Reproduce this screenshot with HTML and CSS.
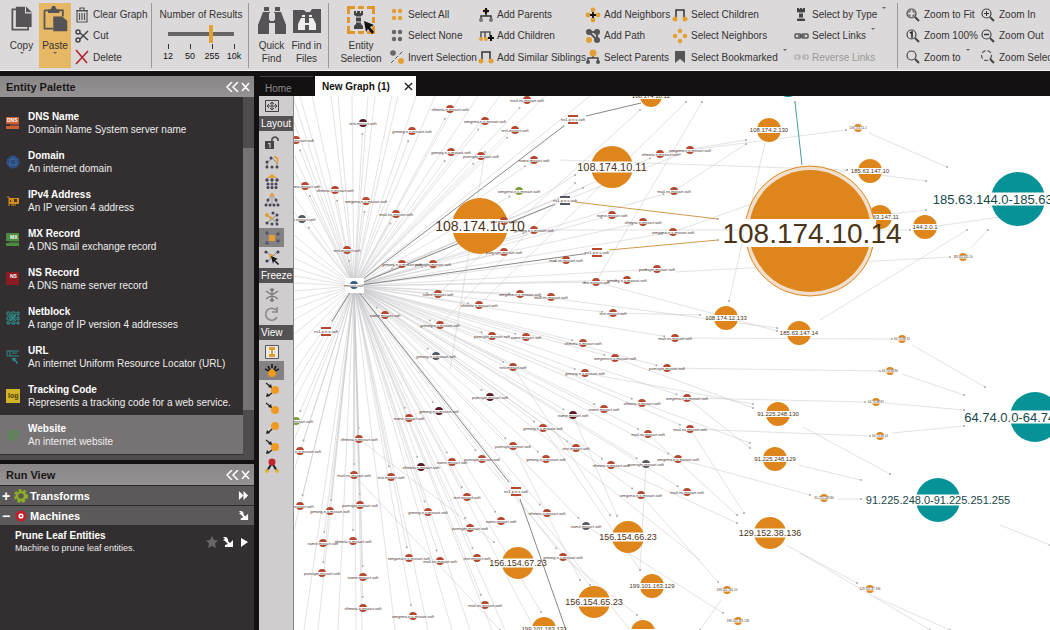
FILE: index.html
```
<!DOCTYPE html>
<html lang="en">

<head>
    <meta charset="UTF-8">
    <title>New Graph (1)</title>
    <link rel="stylesheet" href="styles.css">
</head>

<body>

    <svg class="sprite" aria-hidden="true">
        <symbol id="trash" viewBox="0 0 16 16"><path d="M3 4h10v11H3zM2 3.5h12M6 3V1h4v2M5.5 6v7M8 6v7M10.5 6v7" fill="none" stroke="#555" stroke-width="1.2"/></symbol>
        <symbol id="cut" viewBox="0 0 16 16"><g fill="none" stroke="#444" stroke-width="1.5"><circle cx="4" cy="4" r="2"/><circle cx="4" cy="12" r="2"/><path d="M6 5l8 7M6 11l8-8"/></g></symbol>
        <symbol id="delete" viewBox="0 0 16 16"><path d="M2 1l11 13M14 2L2 15" fill="none" stroke="#b3232d" stroke-width="1.6"/></symbol>
        <symbol id="copy" viewBox="0 0 28 32"><path d="M7 5H3v23h18v-3" fill="none" stroke="#555" stroke-width="2"/><path d="M7 2h12l6 6v17H7z" fill="#555355"/><path d="M18 2v7h7" fill="none" stroke="#ddd" stroke-width="1.2"/></symbol>
        <symbol id="paste" viewBox="0 0 28 32"><path d="M2 6h21v7M2 6v21h10" fill="none" stroke="#555" stroke-width="2"/><path d="M6 9V5h3l2-4h3l2 4h3v4zM12 13h10l6 5v12H12z" fill="#555355"/></symbol>
        <symbol id="binoculars" viewBox="0 0 28 30"><path d="M6 2h5v4H6zM17 2h5v4h-5zM5 7h7v9h4V7h7l5 13v9H17V18h-6v11H0v-9z" fill="#555355"/><path d="M11 8h1v7h-1zM16 8h1v7h-1z" fill="#ddd"/></symbol>
        <symbol id="find-files" viewBox="0 0 28 30"><path d="M0 5h11l2 2h4l2-3h9v24H0z" fill="#555355"/><path d="M9 10h3v2H9zM16 10h3v2h-3zM8 13h4v5h4v-5h4l3 6v6h-7v-5h-4v5H5v-6z" fill="#eee"/></symbol>
        <symbol id="entity-select" viewBox="0 0 28 28"><path d="M1.5 8V1.5H8M11 1.5h6M20 1.5h6.5V8M26.5 11v6M26.5 20v6.5H20M17 26.5h-6M8 26.5H1.5V20M1.5 17v-6" fill="none" stroke="#e5952e" stroke-width="3"/><path d="M7 5h2v2h1V5h3v2h1V5h2v4l-2 1v8l2 2v3H7v-3l2-2v-8L7 9z" fill="#444"/><path d="M9 11h5M9 16h5" stroke="#ddd"/><path d="M17 15l10 4-4 2 4 5-2 2-4-5-2 3z" fill="#111"/></symbol>
        <symbol id="dots-all" viewBox="0 0 16 16"><g fill="#e5a033"><circle cx="5" cy="4" r="2.2"/><circle cx="11" cy="4" r="2.2"/><circle cx="5" cy="11" r="2.2"/><circle cx="11" cy="11" r="2.2"/></g></symbol>
        <symbol id="dots-none" viewBox="0 0 16 16"><g fill="#666"><circle cx="5" cy="4" r="2.2"/><circle cx="11" cy="4" r="2.2"/><circle cx="5" cy="11" r="2.2"/><circle cx="11" cy="11" r="2.2"/></g></symbol>
        <symbol id="invert" viewBox="0 0 16 16"><circle cx="4" cy="4" r="2.8" fill="#666"/><path d="M2 14L14 2" stroke="#555" stroke-dasharray="4 2"/><circle cx="12" cy="12" r="3" fill="#e5a033"/></symbol>
        <symbol id="add-parents" viewBox="0 0 16 16"><path d="M3 12V9h10v3M8 9V6" fill="none" stroke="#333" stroke-width="1.5"/><circle cx="8" cy="4" r="2.5" fill="#e5a033"/><path d="M8 1v6M5 4h6" stroke="#111" stroke-width="2"/><circle cx="3" cy="13" r="2" fill="#777"/><circle cx="13" cy="13" r="2" fill="#777"/></symbol>
        <symbol id="add-children" viewBox="0 0 16 16"><path d="M3 10V4h9v5M7 4v6" fill="none" stroke="#555" stroke-width="1.5"/><circle cx="3" cy="11" r="2" fill="#e5a033"/><circle cx="8" cy="11" r="2" fill="#e5a033"/><path d="M13 7v6M10 10h6" stroke="#111" stroke-width="2"/></symbol>
        <symbol id="siblings" viewBox="0 0 16 16"><path d="M4 11V3h8v8" fill="none" stroke="#333" stroke-width="1.5"/><circle cx="3" cy="12" r="2.5" fill="#e5a033"/><circle cx="13" cy="12" r="2.5" fill="#e5a033"/></symbol>
        <symbol id="add-neighbors" viewBox="0 0 16 16"><g fill="#e5a033"><circle cx="8" cy="3" r="2.4"/><circle cx="3" cy="8" r="2.4"/><circle cx="13" cy="8" r="2.4"/><circle cx="8" cy="13" r="2.4"/></g><path d="M8 5v6M5 8h6" stroke="#111" stroke-width="1.8"/></symbol>
        <symbol id="add-path" viewBox="0 0 16 16"><path d="M4 4h8v8M4 4l8 8" fill="none" stroke="#555" stroke-width="2"/><g fill="#555"><circle cx="4" cy="4" r="3"/><circle cx="12" cy="4" r="3"/><circle cx="12" cy="12" r="3"/></g><circle cx="4" cy="12" r="3" fill="#e5a033"/></symbol>
        <symbol id="select-parents" viewBox="0 0 16 16"><path d="M3 12V9h10v3M8 9V5" fill="none" stroke="#444" stroke-width="1.5"/><circle cx="8" cy="4" r="3.5" fill="#e5a033"/><circle cx="3" cy="13" r="2" fill="#555"/><circle cx="13" cy="13" r="2" fill="#555"/></symbol>
        <symbol id="neighbors" viewBox="0 0 16 16"><g fill="#e5a033"><circle cx="8" cy="3" r="2.2"/><circle cx="3" cy="8" r="2.2"/><circle cx="13" cy="8" r="2.2"/><circle cx="8" cy="13" r="2.2"/></g></symbol>
        <symbol id="bookmark" viewBox="0 0 16 16"><path d="M3 2h10v12l-5-4-5 4z" fill="#555"/></symbol>
        <symbol id="rook" viewBox="0 0 16 16"><path d="M4 1h2v1h1V1h2v1h1V1h2v4l-2 1v5l2 1v2H4v-2l2-1V6L4 5z" fill="#444"/><path d="M5 6h6M5 11h6" stroke="#ddd"/></symbol>
        <symbol id="links" viewBox="0 0 16 16"><g fill="none" stroke="#555" stroke-width="1.5"><rect x="2" y="6" width="6" height="4" rx="1"/><rect x="9" y="6" width="6" height="4" rx="1"/><path d="M5 8h7"/></g></symbol>
        <symbol id="links-off" viewBox="0 0 16 16"><g fill="none" stroke="#aaa" stroke-width="1.2"><rect x="2" y="6" width="5" height="4" rx="1"/><rect x="10" y="6" width="5" height="4" rx="1"/><path d="M5 8h2M10 8h3"/></g></symbol>
        <symbol id="zoom" viewBox="0 0 16 16"><circle cx="6.5" cy="6.5" r="4.5" fill="none" stroke="#444" stroke-width="1.2"/><path d="M10 10l4 4" stroke="#444" stroke-width="2"/></symbol>
        <symbol id="zoom-fit" viewBox="0 0 16 16"><use href="#zoom"/><path d="M4 6V4h2M7 4h2v2M9 7v2H7M6 9H4V7" fill="none" stroke="#555"/></symbol>
        <symbol id="zoom-100" viewBox="0 0 16 16"><use href="#zoom"/><path d="M5 5l2-1v6" fill="none" stroke="#222" stroke-width="1.5"/></symbol>
        <symbol id="zoom-in" viewBox="0 0 16 16"><use href="#zoom"/><path d="M4 6.5h5M6.5 4v5" stroke="#333"/></symbol>
        <symbol id="zoom-out" viewBox="0 0 16 16"><use href="#zoom"/><path d="M4 6.5h5" stroke="#333" stroke-width="1.5"/></symbol>
        <symbol id="zoom-sel" viewBox="0 0 16 16"><circle cx="6.5" cy="6.5" r="5" fill="none" stroke="#555" stroke-width="1.2" stroke-dasharray="4 2"/><path d="M10 10l4 4" stroke="#444" stroke-width="2"/></symbol>
        <symbol id="collapse" viewBox="0 0 24 10"><path d="M6 0L1 5l5 5M12 0L7 5l5 5M16 1l7 8M23 1l-7 8" fill="none" stroke="#fff" stroke-width="1.5"/></symbol>
        <symbol id="wrench" viewBox="0 0 12 12"><path d="M1 1l3 0 2 2v2l2 2 3-3v7H3V9l3-1-3-3-2-1 2-1z" fill="#fff"/></symbol>
        <symbol id="move" viewBox="0 0 16 16"><path d="M1.5 2.5h13v11h-13zM8 4v8M3 8h10M6 6l2-2 2 2M6 10l2 2 2-2M5 6L3 8l2 2M11 6l2 2-2 2" fill="none" stroke="#444"/></symbol>
        <symbol id="unlock" viewBox="0 0 16 16"><path d="M1 6h9v8H1z" fill="#444"/><path d="M8 7V4q3-4 6 0v2" fill="none" stroke="#444" stroke-width="1.5"/><path d="M4 9l2-1v5" stroke="#ddd" fill="none"/></symbol>
        <symbol id="tree-a" viewBox="0 0 16 16"><path d="M8 4L3 9M8 4l5 5M3 9v4M13 9v4" stroke="#888" fill="none"/><g fill="#445"><circle cx="3" cy="8" r="1.5"/><circle cx="3" cy="13" r="1.5"/><circle cx="8" cy="13" r="1.5"/><circle cx="13" cy="13" r="1.5"/><circle cx="7" cy="4" r="1.5"/></g><path d="M10 3q5 0 3 6" stroke="#e5a033" stroke-width="2" fill="none"/></symbol>
        <symbol id="tree-b" viewBox="0 0 16 16"><path d="M8 1L3 5h10z" fill="#e5a033"/><g fill="#445"><circle cx="3" cy="7" r="1.7"/><circle cx="8" cy="7" r="1.7"/><circle cx="13" cy="7" r="1.7"/><circle cx="4" cy="11" r="1.5"/><circle cx="8" cy="11" r="1.5"/><circle cx="12" cy="11" r="1.5"/><circle cx="4" cy="14.5" r="1.5"/><circle cx="8" cy="14.5" r="1.5"/><circle cx="12" cy="14.5" r="1.5"/></g></symbol>
        <symbol id="tree-c" viewBox="0 0 16 16"><path d="M8 3L4 8 2 13M8 3l4 5 2 5M8 3v10" stroke="#999" fill="none"/><circle cx="8" cy="3" r="2" fill="#e5a033"/><g fill="#445"><circle cx="4" cy="8" r="1.5"/><circle cx="12" cy="8" r="1.5"/><circle cx="2" cy="13" r="1.5"/><circle cx="6" cy="13" r="1.5"/><circle cx="10" cy="13" r="1.5"/><circle cx="14" cy="13" r="1.5"/></g></symbol>
        <symbol id="tree-d" viewBox="0 0 16 16"><path d="M3 4l10 8M3 12l10-8" stroke="#888"/><circle cx="3" cy="4" r="2" fill="#e5a033"/><circle cx="7" cy="7" r="1.7" fill="#e5a033"/><g fill="#445"><circle cx="9" cy="2" r="1.5"/><circle cx="13" cy="4" r="1.5"/><circle cx="13" cy="9" r="1.5"/><circle cx="3" cy="12" r="1.5"/><circle cx="8" cy="13" r="1.5"/><circle cx="13" cy="13" r="1.5"/></g></symbol>
        <symbol id="tree-e" viewBox="0 0 16 16"><path d="M3 3l5 5 5-5M3 13l5-5 5 5" stroke="#888" fill="none"/><path d="M5 5h6v6H5z" fill="#e5a033"/><g fill="#556"><circle cx="3" cy="3" r="1.8"/><circle cx="14" cy="4" r="1.8"/><circle cx="3" cy="13" r="1.8"/><circle cx="14" cy="11" r="1.8"/></g></symbol>
        <symbol id="tree-f" viewBox="0 0 16 16"><path d="M2 2l6 6M8 8l5-5M8 8l-5 5" stroke="#888"/><circle cx="7" cy="7" r="2" fill="#e5a033"/><g fill="#445"><circle cx="2" cy="3" r="1.6"/><circle cx="14" cy="3" r="1.6"/><circle cx="3" cy="12" r="1.6"/></g><path d="M7 7l7 3-3 1 4 4-1 1-4-4-1 3z" fill="#111"/></symbol>
        <symbol id="snow" viewBox="0 0 16 16"><path d="M8 1v14M2 4l12 8M14 4L2 12M6 2l2 2 2-2M6 14l2-2 2 2" fill="none" stroke="#777" stroke-width="1.3"/></symbol>
        <symbol id="refresh" viewBox="0 0 16 16"><path d="M13 11A6 6 0 1 1 12 4M13 1v5H8" fill="none" stroke="#888" stroke-width="1.6"/></symbol>
        <symbol id="view-a" viewBox="0 0 16 16"><path d="M1.5 1.5h13v13h-13z" fill="#ece9ea" stroke="#555"/><path d="M5 3h6v3H9v4h2v3H5v-3h2V6H5z" fill="#e5a033"/></symbol>
        <symbol id="view-b" viewBox="0 0 16 16"><circle cx="8" cy="10" r="4" fill="#ef9a20"/><path d="M1 6l4 2M4 3l2 4M8 1v4M12 3l-2 4M15 6l-4 2" stroke="#222" stroke-width="1.7"/></symbol>
        <symbol id="view-c" viewBox="0 0 16 16"><circle cx="11" cy="8" r="4" fill="#ef9a20"/><path d="M2 1l5 4" stroke="#222" stroke-width="1.3"/><path d="M8 6L4 5l3-3z" fill="#222"/><path d="M8 11l-4 3" stroke="#222" stroke-width="1.3"/><path d="M2 15l1-4 3 3z" fill="#222"/></symbol>
        <symbol id="view-d" viewBox="0 0 16 16"><circle cx="11" cy="9" r="4" fill="#ef9a20"/><path d="M2 2l5 4" stroke="#222" stroke-width="1.3"/><path d="M8 7L4 6l3-3z" fill="#222"/></symbol>
        <symbol id="view-e" viewBox="0 0 16 16"><circle cx="11" cy="6" r="4" fill="#ef9a20"/><path d="M8 9l-4 4" stroke="#222" stroke-width="1.3"/><path d="M2 14l1-4 3 3z" fill="#222"/></symbol>
        <symbol id="view-f" viewBox="0 0 16 16"><path d="M8 5l-5 8M8 5l5 8" stroke="#222" stroke-width="2"/><circle cx="8" cy="4" r="3.5" fill="#c1272d"/><circle cx="3" cy="13" r="2" fill="#e0b52c"/><circle cx="13" cy="13" r="2" fill="#e0b52c"/></symbol>
    </svg>

    <header class="toolbar">
        <div class="group clipboard">
            <button class="big"><svg class="icon-lg"><use href="#copy"/></svg>Copy<i class="caret"></i></button>
            <button class="big active"><svg class="icon-lg"><use href="#paste"/></svg>Paste<i class="caret"></i></button>
            <div class="commands edit">
                <button><svg><use href="#trash"/></svg>Clear Graph</button>
                <button><svg><use href="#cut"/></svg>Cut</button>
                <button><svg><use href="#delete"/></svg>Delete</button>
            </div>
        </div>
        <div class="group results">
            <label for="results">Number of Results</label>
            <input type="range" id="results" min="0" max="3" value="2">
            <div class="ticks"><span>12</span><span>50</span><span>255</span><span>10k</span></div>
        </div>
        <div class="group find">
            <button class="big"><svg class="icon-lg"><use href="#binoculars"/></svg>Quick<br>Find</button>
            <button class="big"><svg class="icon-lg"><use href="#find-files"/></svg>Find in<br>Files</button>
        </div>
        <div class="group selection">
            <button class="big wide"><svg class="icon-lg"><use href="#entity-select"/></svg>Entity<br>Selection</button>
            <div class="commands col-all">
                <button><svg><use href="#dots-all"/></svg>Select All</button>
                <button><svg><use href="#dots-none"/></svg>Select None</button>
                <button><svg><use href="#invert"/></svg>Invert Selection</button>
            </div>
            <div class="commands col-add">
                <button><svg><use href="#add-parents"/></svg>Add Parents</button>
                <button><svg><use href="#add-children"/></svg>Add Children</button>
                <button><svg><use href="#siblings"/></svg>Add Similar Siblings</button>
            </div>
            <div class="commands col-path">
                <button><svg><use href="#add-neighbors"/></svg>Add Neighbors</button>
                <button><svg><use href="#add-path"/></svg>Add Path</button>
                <button><svg><use href="#select-parents"/></svg>Select Parents</button>
            </div>
            <div class="commands col-select">
                <button><svg><use href="#siblings"/></svg>Select Children</button>
                <button><svg><use href="#neighbors"/></svg>Select Neighbors</button>
                <button><svg><use href="#bookmark"/></svg>Select Bookmarked<i class="caret up"></i></button>
            </div>
            <div class="commands col-type">
                <button><svg><use href="#rook"/></svg>Select by Type<i class="caret up"></i></button>
                <button><svg><use href="#links"/></svg>Select Links<i class="caret up"></i></button>
                <button disabled><svg><use href="#links-off"/></svg>Reverse Links</button>
            </div>
        </div>
        <div class="group zoom">
            <div class="commands col-zoom">
                <button><svg><use href="#zoom-fit"/></svg>Zoom to Fit</button>
                <button><svg><use href="#zoom-100"/></svg>Zoom 100%</button>
                <button><svg><use href="#zoom"/></svg>Zoom to<i class="caret up"></i></button>
            </div>
            <div class="commands">
                <button><svg><use href="#zoom-in"/></svg>Zoom In</button>
                <button><svg><use href="#zoom-out"/></svg>Zoom Out</button>
                <button><svg><use href="#zoom-sel"/></svg>Zoom Selection</button>
            </div>
        </div>
    </header>

    <main class="workspace">
        <aside class="sidebar">
            <section class="palette">
                <div class="panel-head">
                    <h2>Entity Palette</h2>
                    <button aria-label="Collapse Entity Palette"><svg><use href="#collapse"/></svg></button>
                </div>
                <div class="palette-body">
                    <ul class="entities">
                        <li><svg viewBox="0 0 14 14"><path d="M0 1h13v7H0zM0 10h13v3H0z" fill="#c95f33"/><path d="M4 9h9" stroke="#c95f33"/><text x="1" y="6" class="tag">DNS</text></svg><div><h3>DNS Name</h3><p>Domain Name System server name</p></div></li>
                        <li><svg viewBox="0 0 14 14"><circle cx="7" cy="7" r="6" fill="#2b4a78" stroke="#2f5f9f" stroke-dasharray="3 1"/><path d="M4 4h6v6H4zM7 2v3M3 8l2 3M9 11l2-3" stroke="#3f6ba8" fill="none"/></svg><div><h3>Domain</h3><p>An internet domain</p></div></li>
                        <li><svg viewBox="0 0 14 14"><path d="M1 3h2v9" fill="none" stroke="#d18b1d"/><path d="M3 4h10v6H3z" fill="#d18b1d"/><path d="M8 5h3v3H8zM4 6h1v2H4z" fill="#4b3414"/><path d="M5 11h5" stroke="#d18b1d"/></svg><div><h3>IPv4 Address</h3><p>An IP version 4 address</p></div></li>
                        <li><svg viewBox="0 0 14 14"><path d="M0 0h13v8H0zM0 10h13v3H0z" fill="#4c8a3d"/><path d="M3 9h10" stroke="#4c8a3d"/><text x="4" y="6" class="tag">MX</text></svg><div><h3>MX Record</h3><p>A DNS mail exchange record</p></div></li>
                        <li><svg viewBox="0 0 14 14"><path d="M0 0h13v13H0z" fill="#8c1b22"/><text x="4" y="6" class="tag">NS</text></svg><div><h3>NS Record</h3><p>A DNS name server record</p></div></li>
                        <li><svg viewBox="0 0 14 14"><path d="M1 1h3v3H1zM6 1h3v3H6zM11 1h2v3h-2zM1 6h3v3H1zM5 5h4v4H5zM11 6h2v3h-2zM1 11h3v2H1zM6 11h3v2H6zM11 11h2v2h-2zM4 4l6 6M10 4l-6 6" fill="none" stroke="#2f9490"/></svg><div><h3>Netblock</h3><p>A range of IP version 4 addresses</p></div></li>
                        <li><svg viewBox="0 0 14 14"><path d="M13 1H1v5h12M4 1v5M6 3h5" fill="none" stroke="#2f8a86"/><path d="M6 8h5l-2 1 3 4-1 1-3-4-1 2z" fill="#2f9490"/></svg><div><h3>URL</h3><p>An internet Uniform Resource Locator (URL)</p></div></li>
                        <li><svg viewBox="0 0 14 14"><path d="M0 0h14v14H0z" fill="#d3b426"/><text x="2" y="9" class="log">log</text></svg><div><h3>Tracking Code</h3><p>Represents a tracking code for a web service.</p></div></li>
                        <li class="selected"><svg viewBox="0 0 14 14"><path d="M1 2l3 1 3-2 3 2 3-1v8l-3 2-3 1-3-1-3-2z" fill="#63815c"/></svg><div><h3>Website</h3><p>An internet website</p></div></li>
                    </ul>
                    <div class="scroll"><div class="thumb"></div></div>
                </div>
            </section>

            <section class="run">
                <div class="panel-head">
                    <h2>Run View</h2>
                    <button aria-label="Collapse Run View"><svg><use href="#collapse"/></svg></button>
                </div>
                <div class="run-row">
                    <span class="sign">+</span>
                    <svg viewBox="0 0 14 14"><circle cx="7" cy="7" r="6" fill="none" stroke="#8fae25" stroke-width="2" stroke-dasharray="3 2"/><circle cx="7" cy="7" r="4" fill="none" stroke="#8fae25" stroke-width="2.5"/></svg>
                    <h3>Transforms</h3>
                    <button aria-label="Run all"><svg viewBox="0 0 12 12"><path d="M1 1l5 5-5 5zM6 1l5 5-5 5z" fill="#fff"/></svg></button>
                </div>
                <div class="run-row">
                    <span class="sign">−</span>
                    <svg viewBox="0 0 14 14"><circle cx="7" cy="7" r="5.5" fill="#c1202b"/><circle cx="7" cy="7" r="1.8" fill="#c1202b" stroke="#fff" stroke-width="1.5"/></svg>
                    <h3>Machines</h3>
                    <button aria-label="Configure machines"><svg><use href="#wrench"/></svg></button>
                </div>
                <div class="machine">
                    <div>
                        <h3>Prune Leaf Entities</h3>
                        <p>Machine to prune leaf entities.</p>
                    </div>
                    <button aria-label="Favourite"><svg viewBox="0 0 12 12"><path d="M6 0l2 4 4 .5-3 3 1 4.500-4-2-4 2 1-4.500-3-3L4 4z" fill="#666"/></svg></button>
                    <button aria-label="Configure"><svg><use href="#wrench"/></svg></button>
                    <button aria-label="Run"><svg viewBox="0 0 12 12"><path d="M3 2l7 4-7 5z" fill="#fff"/></svg></button>
                </div>
            </section>
        </aside>

        <section class="editor">
            <nav class="tabs">
                <a href="#home" class="tab">Home</a>
                <a href="#graph" class="tab current">New Graph (1)<svg viewBox="0 0 10 10"><path d="M1 1l8 8M9 1L1 9" stroke="#222" stroke-width="1.5"/></svg></a>
            </nav>
            <div class="canvas-row">
                <div class="tools">
                    <button class="first" aria-label="Fit"><svg><use href="#move"/></svg></button>
                    <h4>Layout</h4>
                    <div class="tool-list">
                        <button aria-label="Lock"><svg><use href="#unlock"/></svg></button>
                        <button aria-label="Interactive layout"><svg><use href="#tree-a"/></svg></button>
                        <button aria-label="Block layout"><svg><use href="#tree-b"/></svg></button>
                        <button aria-label="Hierarchical layout"><svg><use href="#tree-c"/></svg></button>
                        <button aria-label="Circular layout"><svg><use href="#tree-d"/></svg></button>
                        <button aria-label="Organic layout" class="on"><svg><use href="#tree-e"/></svg></button>
                        <button aria-label="Manual layout"><svg><use href="#tree-f"/></svg></button>
                    </div>
                    <h4>Freeze</h4>
                    <div class="tool-list">
                        <button aria-label="Freeze"><svg><use href="#snow"/></svg></button>
                        <button aria-label="Refresh"><svg><use href="#refresh"/></svg></button>
                    </div>
                    <h4>View</h4>
                    <div class="tool-list">
                        <button aria-label="Normal view"><svg><use href="#view-a"/></svg></button>
                        <button aria-label="Ball size by links" class="on"><svg><use href="#view-b"/></svg></button>
                        <button aria-label="Both links"><svg><use href="#view-c"/></svg></button>
                        <button aria-label="Incoming links"><svg><use href="#view-d"/></svg></button>
                        <button aria-label="Outgoing links"><svg><use href="#view-e"/></svg></button>
                        <button aria-label="Weighted links"><svg><use href="#view-c"/></svg></button>
                        <button aria-label="Rank"><svg><use href="#view-f"/></svg></button>
                    </div>
                </div>
                <div class="graph"><svg id="graph" role="img" aria-label="Entity graph"></svg></div>
            </div>
        </section>
    </main>

    <script src="graph.js"></script>
</body>

</html>
```
FILE: styles.css
```
* {
    box-sizing: border-box;
}

body {
    margin: 0;
    height: 100vh;
    display: flex;
    flex-direction: column;
    overflow: hidden;
    background: #141112;
    color: #333;
    font-family: "Liberation Sans", Arial, sans-serif;
    font-size: 10px;
}

h2,
h3,
h4,
p,
ul {
    margin: 0;
    padding: 0;
}

button {
    margin: 0;
    padding: 0;
    border: 0;
    background: none;
    color: inherit;
    font: inherit;
    white-space: nowrap;
}

.sprite {
    display: none;
}

/* top toolbar */
.toolbar {
    display: flex;
    flex: none;
    height: 71px;
    padding: 3px 0 2px 4px;
    background: #dcd9da;
    border-bottom: 1px solid #f4f4f4;
    overflow: hidden;
}

.group {
    display: flex;
    flex: none;
    border-right: 1px solid #999;
}

.zoom {
    border-right: 0;
    padding-left: 7px;
}

.big {
    display: flex;
    flex-direction: column;
    align-items: center;
    width: 35px;
    padding-top: 2px;
    line-height: 13px;
}

.icon-lg {
    width: 28px;
    height: 30px;
    margin-bottom: 4px;
}

.clipboard {
    width: 148px;
}

.clipboard .icon-lg {
    height: 28px;
    margin-bottom: 6px;
}

.active {
    width: 32px;
    background: #e6b765;
}

.caret {
    border: 2px solid transparent;
    border-top-color: #666;
}

.caret.up {
    margin: -12px 0 0 2px;
}

.commands {
    display: flex;
    flex-direction: column;
    padding-top: 1px;
}

.commands button {
    display: flex;
    align-items: center;
    gap: 3px;
    height: 22px;
}

.commands button:disabled {
    color: #999;
}

.commands svg {
    flex: none;
    width: 16px;
    height: 16px;
}

.edit {
    margin-left: 3px;
}

.results {
    flex-direction: column;
    align-items: center;
    width: 97px;
    padding: 6px 0 0 2px;
}

.results input {
    width: 66px;
    height: 20px;
    margin: 4px 0 0;
    appearance: none;
    background: linear-gradient(#666, #666) center / 100% 4px no-repeat;
}

.results input::-webkit-slider-thumb {
    appearance: none;
    width: 4px;
    height: 18px;
    background: #e5a033;
}

.ticks {
    display: flex;
    justify-content: space-between;
    width: 88px;
    font-size: 9px;
    color: #111;
}

.ticks span {
    width: 22px;
    text-align: center;
}

.ticks span::before {
    content: "";
    display: block;
    width: 1px;
    height: 5px;
    margin: 0 auto 2px;
    background: #333;
}

.find {
    width: 80px;
    padding-left: 5px;
}

.selection {
    width: 569px;
}

.wide {
    width: 60px;
    padding-left: 4px;
}

.col-all {
    width: 89px;
}

.col-add {
    width: 107px;
}

.col-path {
    width: 87px;
}

.col-select {
    width: 121px;
}

.col-zoom {
    width: 75px;
}

/* panels */
.workspace {
    display: flex;
    flex: 1;
    min-height: 0;
    padding-top: 5px;
}

.sidebar {
    display: flex;
    flex: none;
    flex-direction: column;
    gap: 4px;
    width: 254px;
    color: #eee;
}

.panel-head {
    display: flex;
    align-items: center;
    justify-content: space-between;
    height: 21px;
    padding: 0 4px 0 6px;
    background: linear-gradient(#8a8687, #969293);
}

.panel-head h2 {
    color: #1a1718;
    font-size: 11px;
}

.panel-head svg {
    display: block;
    width: 24px;
    height: 10px;
}

.palette-body {
    display: flex;
    background: #332f30;
}

.entities {
    flex: 1;
    padding: 6px 0 1px;
    border-bottom: 5px solid #504c4d;
    list-style: none;
}

.entities li {
    display: flex;
    align-items: center;
    gap: 8px;
    height: 39px;
    padding-left: 6px;
}

.entities li.selected {
    background: #777374;
}

.entities svg {
    width: 14px;
    height: 14px;
    margin-top: 1px;
}

.entities h3,
.machine h3 {
    font-size: 10px;
    line-height: 13px;
    color: #fff;
}

.entities p {
    line-height: 13px;
    white-space: nowrap;
}

.tag {
    font-size: 5px;
    font-weight: bold;
    fill: #fff;
}

.log {
    font-size: 7px;
    font-weight: bold;
    fill: #4a3b08;
}

.scroll {
    width: 11px;
    padding: 51px 0 50px;
    background: #504c4d;
}

.thumb {
    height: 100%;
    background: #777374;
}

.run {
    flex: 1;
    background: #332f30;
}

.run-row {
    display: flex;
    align-items: center;
    gap: 2px;
    height: 20px;
    padding: 0 5px 0 2px;
    border-top: 1px solid #2b2829;
    background: #5c595a;
    color: #fff;
}

.run-row h3 {
    flex: 1;
    font-size: 11px;
}

.run-row svg {
    width: 14px;
    height: 14px;
}

.run-row button svg {
    display: block;
    width: 11px;
    height: 11px;
}

.sign {
    width: 10px;
    font-size: 14px;
    font-weight: bold;
    line-height: 14px;
}

.machine {
    display: flex;
    align-items: center;
    gap: 4px;
    padding: 4px 4px 0 15px;
}

.machine div {
    flex: 1;
}

.machine p {
    font-size: 9px;
    line-height: 13px;
}

.machine svg {
    display: block;
    width: 12px;
    height: 12px;
}

/* graph editor */
.editor {
    display: flex;
    flex: 1;
    flex-direction: column;
    min-width: 0;
    padding-left: 5px;
}

.tabs {
    display: flex;
    gap: 2px;
    height: 20px;
    padding-left: 1px;
}

.tab {
    display: flex;
    align-items: center;
    width: 53px;
    padding: 4px 0 0 5px;
    border-top: 1px solid #444;
    color: #8c8889;
    text-decoration: none;
}

.current {
    justify-content: space-between;
    width: 101px;
    padding: 0 3px 0 7px;
    border: 0;
    background: #fff;
    color: #111;
    font-weight: bold;
}

.current svg {
    width: 9px;
    height: 9px;
}

.canvas-row {
    display: flex;
    flex: 1;
    min-height: 0;
}

.tools {
    flex: none;
    width: 35px;
    background: #cfcdce;
    border-right: 1px solid #888;
}

.tools h4 {
    height: 15px;
    padding-left: 2px;
    background: #555253;
    color: #fff;
    font-size: 10px;
    font-weight: normal;
    line-height: 15px;
    white-space: nowrap;
}

.tools button {
    display: flex;
    align-items: center;
    justify-content: center;
    width: 25px;
    height: 19px;
}

.tools .first {
    height: 20px;
}

.tools .on {
    background: #858283;
}

.tools svg {
    width: 16px;
    height: 16px;
}

.tool-list {
    padding: 2px 0;
}

.graph {
    flex: 1;
    min-width: 0;
    background: #fff;
    overflow: hidden;
}

#graph {
    display: block;
    width: 100%;
    height: 100%;
}

.edge {
    stroke: #c9c8cc;
    stroke-width: 1;
    opacity: 0.5;
}

.edge-dark {
    stroke: #888;
    stroke-width: 1;
}

.edge-orange {
    stroke: #cf9a4b;
    stroke-width: 1;
}

.edge-teal {
    stroke: #4b9c9c;
    stroke-width: 1;
}

.tip {
    fill: #aaa;
}

.node-text {
    fill: #4b3417;
    text-anchor: middle;
}

.node-text.net {
    fill: #17484c;
}

.host-text {
    fill: #4a3530;
    font-size: 4px;
    text-anchor: middle;
}
```
FILE: graph.js
```
const svg = document.getElementById('graph');
const NS = 'http://www.w3.org/2000/svg';

const RED = '#b5482f';
const MAROON = '#5b1a26';
const GREEN = '#7fa03c';
const GRAY = '#555960';
const ORANGE = '#de861c';
const TEAL = '#079297';

// view offset of the canvas inside the graph space
const view = make('g', { transform: 'translate(-294 -96)' }, svg);
const hub = [354, 286];

const hosts = [
    [412, 131], [296, 140], [305, 186], [335, 190], [366, 201], [396, 214], [347, 250],
    [402, 264], [433, 264], [385, 315], [450, 109], [485, 121], [527, 100], [515, 130],
    [451, 152], [481, 156], [534, 160], [660, 154], [690, 150], [674, 191], [504, 221],
    [534, 230], [504, 252], [612, 215], [643, 222], [673, 232], [566, 260], [596, 282],
    [627, 280], [657, 269], [438, 294], [479, 305], [520, 294], [551, 297], [613, 313],
    [440, 325], [492, 336], [526, 337], [583, 343], [615, 358], [675, 338], [513, 367],
    [585, 373], [667, 368], [409, 418], [359, 439], [300, 451], [354, 475], [391, 477],
    [543, 428], [513, 446], [604, 409], [642, 403], [687, 398], [648, 434], [576, 448],
    [546, 459], [482, 459], [452, 462], [611, 465], [678, 459], [690, 429], [467, 497],
    [428, 512], [470, 528], [501, 521], [547, 513], [641, 495], [687, 492], [300, 506],
    [330, 511], [360, 505], [323, 543], [353, 541], [409, 558], [440, 561], [477, 558],
    [563, 557], [322, 573], [363, 577], [363, 608], [413, 616], [485, 605],
    [363, 123, MAROON], [439, 411, MAROON], [490, 397, MAROON], [573, 415, MAROON],
    [421, 467, MAROON], [519, 191, GREEN], [296, 421, GREEN], [302, 219, GRAY],
    [436, 356, GRAY], [646, 464, GRAY], [586, 526, GRAY]
];

const servers = [
    [573, 119, RED], [565, 200, GRAY], [597, 252, RED], [326, 331, RED], [516, 491, RED]
];

// x, y, radius, font size, label
const addresses = [
    [880, 217, 12, 6, '185.63.147.11'], [480, 226, 28, 14, '108.174.10.10'],
    [612, 167, 21, 11, '108.174.10.11'], [651, 96, 11, 6, '108.174.10.12'],
    [769, 130, 12, 6, '108.174.2.130'], [870, 171, 12, 6, '185.63.147.10'],
    [925, 227, 12, 6, '144.2.0.1'], [726, 318, 12, 6, '108.174.12.133'],
    [799, 333, 12, 6, '185.63.147.14'], [778, 414, 12, 6, '91.225.248.130'],
    [775, 459, 12, 6, '91.225.248.129'], [770, 533, 16, 9, '129.152.38.136'],
    [518, 563, 16, 9, '156.154.67.23'], [628, 537, 16, 9, '156.154.66.23'],
    [594, 602, 16, 9, '156.154.65.23'], [652, 586, 12, 6, '199.101.163.129'],
    [544, 629, 12, 6, '199.101.163.133'], [643, 632, 12, 6, '199.101.162.25'],
    [858, 128, 4, 3, '108.174.11.1'], [963, 257, 4, 3, '185.63.145.10'],
    [902, 339, 4, 3, '64.74.98.10'], [890, 371, 4, 3, '64.74.98.80'],
    [876, 402, 4, 3, '64.74.98.81'], [880, 436, 4, 3, '64.74.98.14'],
    [824, 498, 4, 3, '91.225.248.80'], [870, 589, 4, 3, '129.152.37.136'],
    [727, 590, 4, 3, '199.101.161.10'], [738, 621, 4, 3, '199.101.161.130']
];

const netblocks = [
    [788, 85, 12, 6, '108.174.0.0'],
    [1018, 199, 27, 13, '185.63.144.0-185.63.159.255'],
    [1035, 417, 25, 13, '64.74.0.0-64.74.255.255'],
    [938, 500, 22, 11, '91.225.248.0-91.225.251.255']
];

// far ends of hub edges that leave the canvas
const rays = [
    [294, 100], [294, 122], [294, 155], [294, 170], [294, 196], [294, 212], [294, 235], [294, 246],
    [294, 258], [294, 268], [294, 276], [294, 283], [294, 291], [294, 300], [294, 309], [294, 320],
    [294, 334], [294, 350], [294, 372], [294, 386], [294, 402], [294, 440], [294, 470], [294, 530],
    [300, 96], [312, 96], [331, 96], [338, 96], [352, 96], [368, 96], [375, 96], [392, 96],
    [398, 96], [416, 96], [435, 96], [460, 96], [478, 96], [500, 96], [545, 96], [590, 96],
    [304, 630], [318, 630], [338, 630], [356, 630], [362, 630], [395, 630], [428, 630],
    [452, 630], [470, 630], [492, 630], [505, 630], [535, 630], [630, 630], [700, 560]
];

const links = [
    [450, 370, 485, 152], [660, 154, 746, 140], [674, 191, 746, 144], [690, 150, 846, 130],
    [869, 133, 947, 167], [765, 143, 729, 301], [673, 232, 847, 170], [560, 160, 847, 170],
    [880, 175, 926, 181], [890, 214, 926, 210], [535, 230, 910, 230], [938, 226, 1000, 217],
    [675, 272, 950, 257], [971, 248, 988, 230], [820, 320, 967, 230], [520, 294, 777, 328],
    [613, 313, 700, 315], [596, 282, 777, 331], [675, 338, 892, 339], [912, 345, 985, 387],
    [667, 368, 880, 371], [687, 398, 865, 402], [690, 429, 870, 436], [902, 374, 964, 395],
    [885, 403, 964, 410], [892, 433, 964, 426], [585, 373, 753, 404], [615, 358, 753, 408],
    [642, 403, 750, 443], [687, 398, 750, 448], [803, 427, 890, 474], [798, 465, 861, 480],
    [678, 459, 810, 495], [838, 499, 861, 499], [611, 465, 737, 523], [690, 429, 744, 513],
    [648, 434, 737, 515], [786, 545, 857, 583], [800, 553, 930, 630], [873, 596, 950, 630],
    [641, 495, 718, 582], [586, 526, 723, 613], [721, 600, 700, 630], [1000, 525, 1050, 545],
    [513, 367, 610, 515], [482, 459, 590, 585], [513, 446, 580, 580], [354, 475, 500, 630],
    [359, 439, 494, 542], [573, 415, 617, 516], [646, 464, 640, 570], [543, 428, 640, 570],
    [452, 462, 541, 612], [563, 557, 637, 615], [438, 294, 640, 110], [479, 305, 686, 102],
    [596, 282, 702, 102], [440, 325, 575, 183], [402, 264, 583, 188], [433, 264, 575, 175]
];

const names = ['jpmorg.n.s', 'pamsyte', 'name', 'sftmeta.n', 'wmjpmo.n.s', 'mail-ns', 'test'];

function make(tag, attrs, parent) {
    const el = document.createElementNS(NS, tag);
    for (const key in attrs) el.setAttribute(key, attrs[key]);
    (parent || view).appendChild(el);
    return el;
}

function line(x1, y1, x2, y2, kind, arrow) {
    make('line', { x1, y1, x2, y2, class: kind });
    if (arrow) make('circle', { cx: x2, cy: y2, r: 1, class: 'tip' });
}

// stops an edge a bit before the node it points to
function hubLine(x, y, kind, short) {
    const dx = x - hub[0];
    const dy = y - hub[1];
    const k = 1 - short / Math.hypot(dx, dy);
    line(hub[0], hub[1], hub[0] + dx * k, hub[1] + dy * k, kind, true);
}

function text(x, y, size, label, cls) {
    const el = make('text', { x, y, class: cls });
    if (size) el.setAttribute('font-size', size);
    el.textContent = label;
}

function ball(x, y, r, size, label, color, cls) {
    make('circle', { cx: x, cy: y, r, fill: color });
    make('rect', { x: x - r - 1, y: y - size / 2, width: r * 2 + 2, height: size, fill: '#fff' });
    text(x, y + size * 0.36, size, label, cls);
}

rays.forEach(([x, y]) => line(hub[0], hub[1], x, y, 'edge'));
hosts.forEach(([x, y]) => hubLine(x, y, 'edge', 11));
links.forEach(([x1, y1, x2, y2]) => line(x1, y1, x2, y2, 'edge', true));
servers.forEach(([x, y]) => hubLine(x, y, 'edge-dark', 12));

line(586, 116, 641, 103, 'edge-dark');
line(520, 499, 566, 630, 'edge-dark');
line(575, 202, 718, 219, 'edge-orange', true);
line(609, 250, 718, 240, 'edge-orange', true);
line(802, 165, 795, 102, 'edge-teal', true);

addresses.forEach(([x, y, r, size, label]) => ball(x, y, r, size, label, ORANGE, 'node-text'));
netblocks.forEach(([x, y, r, size, label]) => ball(x, y, r, size, label, TEAL, 'node-text net'));

hosts.forEach(([x, y, color], i) => {
    make('circle', { cx: x, cy: y, r: 4, fill: color || RED });
    make('rect', { x: x - 5, y: y - 1, width: 10, height: 3, fill: '#fff' });
    text(x, y + 2, 0, names[i % names.length] + '.mssart.soft', 'host-text');
});

servers.forEach(([x, y, color]) => {
    make('rect', { x: x - 5, y: y - 4, width: 10, height: 9, fill: color });
    make('rect', { x: x - 6, y: y - 2, width: 12, height: 5, fill: '#fff' });
    text(x, y + 2, 0, 'ns1.p.n.s.soft', 'host-text');
});

// selected address
make('circle', { cx: 810, cy: 231, r: 65, fill: '#f1dfcd', stroke: ORANGE });
make('circle', { cx: 810, cy: 231, r: 61, fill: ORANGE });
make('rect', { x: 744, y: 219, width: 132, height: 28, fill: '#fff' });
text(812, 243, 28, '108.174.10.14', 'node-text');

// hub
make('rect', { x: 345, y: 278, width: 19, height: 15, fill: '#fff' });
make('circle', { cx: 354, cy: 285, r: 4, fill: '#3a5a82' });
make('rect', { x: 348, y: 284, width: 12, height: 3, fill: '#fff' });
text(354, 287, 0, 'mssart.soft', 'host-text');
```
